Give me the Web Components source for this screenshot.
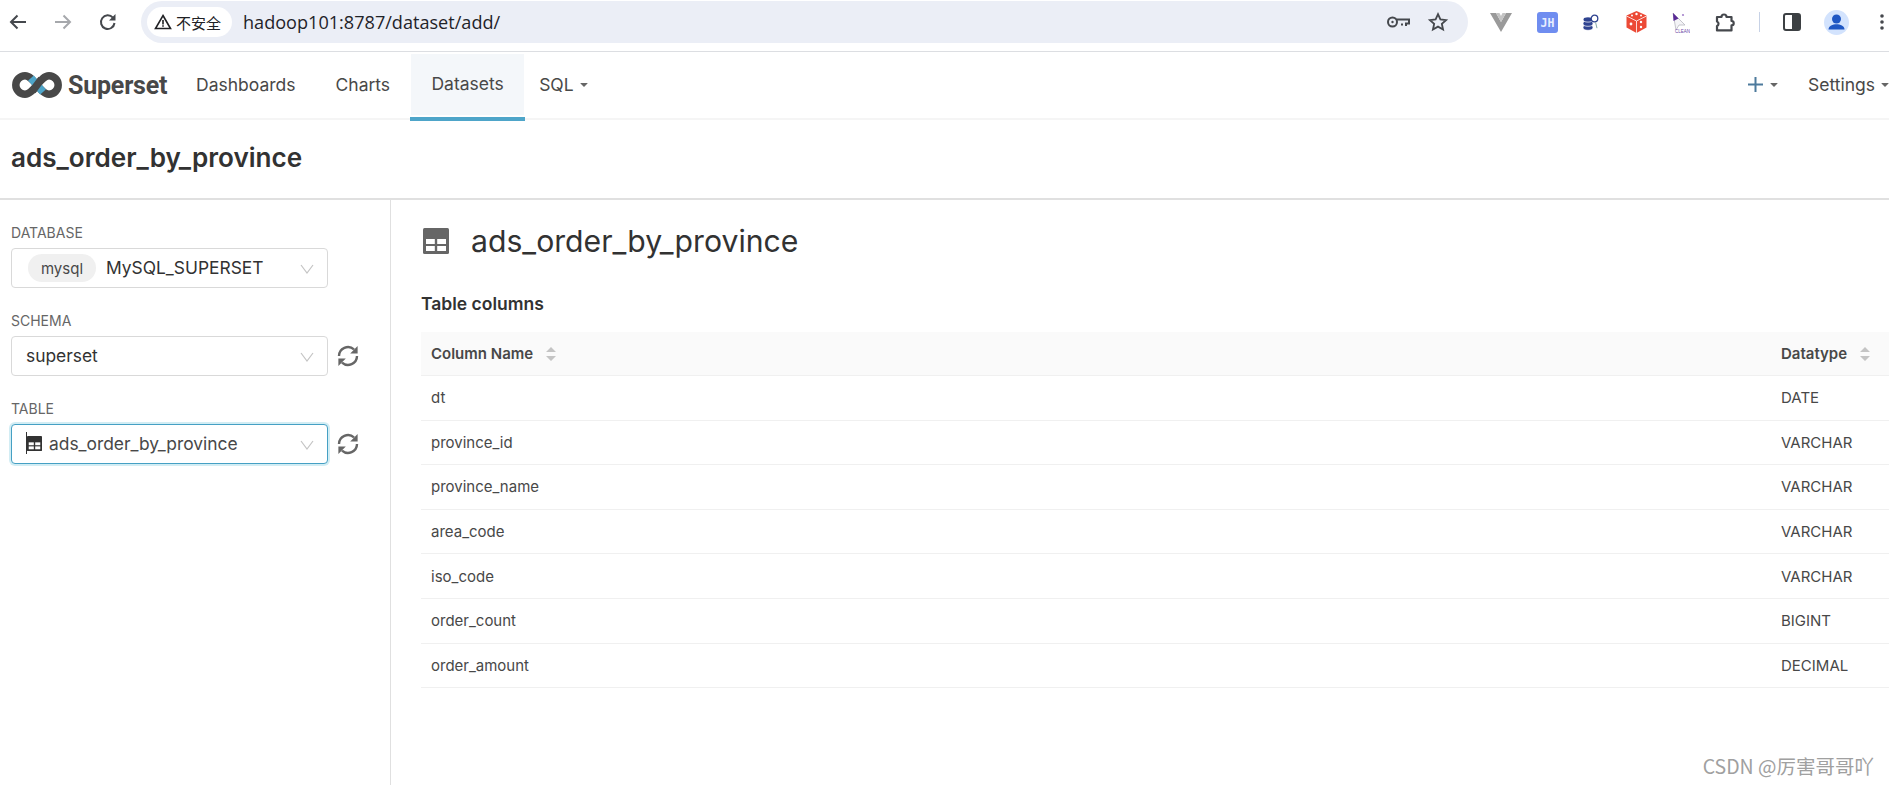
<!DOCTYPE html>
<html>
<head>
<meta charset="utf-8">
<title>Superset</title>
<style>
html,body{margin:0;padding:0;background:#fff;height:100%;overflow:hidden}
body{font-family:Inter,"Noto Sans CJK SC",sans-serif;color:#484848}
</style>
</head>
<body>
<app-page>
  <browser-bar url="hadoop101:8787/dataset/add/"></browser-bar>
  <top-nav></top-nav>
  <page-title>ads_order_by_province</page-title>
  <dataset-view>
    <side-panel slot="side"></side-panel>
    <columns-panel slot="main" name="ads_order_by_province"></columns-panel>
  </dataset-view>
  <water-mark>CSDN @厉害哥哥吖</water-mark>
</app-page>

<script>
const tableIcon = (size, color) => `<svg width="${size}" height="${size}" viewBox="0 0 26 26" style="display:block;flex:none"><rect width="26" height="26" rx="1.5" fill="${color}"/><rect x="3" y="11" width="8.8" height="5" fill="#fff"/><rect x="14.2" y="11" width="8.8" height="5" fill="#fff"/><rect x="3" y="18" width="8.8" height="5" fill="#fff"/><rect x="14.2" y="18" width="8.8" height="5" fill="#fff"/></svg>`;

const refreshIcon = `<svg width="22" height="22" viewBox="0 0 22 22" fill="none" stroke="#666" stroke-width="2.4" style="display:block"><path d="M2 11a9 9 0 0 1 15-6.600"/><path d="M20 11a9 9 0 0 1-15 6.600"/><path d="M20.600 1v7.400h-7.400z" fill="#666" stroke="none"/><path d="M1.400 21v-7.400h7.400z" fill="#666" stroke="none"/></svg>`;

class AppPage extends HTMLElement {
  constructor() {
    super();
    this.attachShadow({mode: 'open'}).innerHTML = `
    <style>:host{display:flex;flex-direction:column;height:785px;width:1889px;position:relative;overflow:hidden}</style>
    <slot></slot>`;
  }
}
customElements.define('app-page', AppPage);

class BrowserBar extends HTMLElement {
  connectedCallback() {
    this.attachShadow({mode: 'open'}).innerHTML = `
    <style>
    :host{display:flex;align-items:center;height:51px;border-bottom:1px solid #dcdee2;box-sizing:content-box;background:#fff;flex:none;
      font-family:"Open Sans","Noto Sans CJK SC",sans-serif}
    .nav{display:flex;width:141px;flex:none;padding-left:8px;box-sizing:border-box;gap:25px;padding-bottom:7px}
    .nav svg{display:block}
    .pill{flex:none;width:1327px;height:42px;margin-bottom:7px;background:#ebeef6;border-radius:21px;display:flex;align-items:center;padding:0 6px;box-sizing:border-box}
    .chip{display:flex;align-items:center;gap:4px;background:#fff;height:30px;width:85px;border-radius:15px;padding-left:7px;box-sizing:border-box;font-size:15px;color:#202124;flex:none;white-space:nowrap}
    .url{margin-left:11px;font-size:18.1px;color:#1f2329;flex:1}
    .pill svg{display:block}
    .star{display:flex;gap:17px;align-items:center;margin-right:13px}
    .ext{display:flex;align-items:center;flex:1;padding-bottom:7px;position:relative;height:24px}
    .ext>*{flex:none}
    </style>
    <div class="nav">
      <svg width="20" height="20" viewBox="0 0 20 20" fill="none" stroke="#45484d" stroke-width="2"><path d="M18 10H3M9.5 3.5 3 10l6.500 6.500"/></svg>
      <svg width="20" height="20" viewBox="0 0 20 20" fill="none" stroke="#a6a8ac" stroke-width="2"><path d="M2 10h15M10.500 3.500 17 10l-6.500 6.500"/></svg>
      <svg width="20" height="20" viewBox="0 0 20 20" fill="none" stroke="#45484d" stroke-width="2"><path d="M16.500 11a6.800 6.800 0 1 1-1.600-5.300"/><path d="M17.500 2v6.500H11z" fill="#45484d" stroke="none"/></svg>
    </div>
    <div class="pill">
      <div class="chip">
        <svg width="18" height="18" viewBox="0 0 18 18" style="flex:none"><path d="M9 2.500 16.500 15.500H1.500Z" fill="none" stroke="#202124" stroke-width="1.600"/><path d="M8.200 7h1.600v4.500H8.200zM8.200 12.300h1.600v1.500H8.200z" fill="#202124"/></svg>
        <span>不安全</span>
      </div>
      <div class="url">${this.getAttribute('url')}</div>
      <div class="star">
        <svg width="24" height="14" viewBox="0 0 24 14" fill="none" stroke="#45484d" stroke-width="2"><circle cx="6.500" cy="7" r="4.500"/><circle cx="6.500" cy="7" r="1.200" fill="#45484d" stroke="none"/><path d="M11 4.500h12v4h-3v2.500M16 8.500v2"/></svg>
        <svg width="22" height="22" viewBox="0 0 24 24" fill="none" stroke="#45484d" stroke-width="2"><path d="M12 3.500l2.600 5.700 6.200.7-4.600 4.200 1.300 6.100L12 17.100l-5.500 3.100 1.300-6.100-4.600-4.200 6.200-.7z"/></svg>
      </div>
    </div>
    <div class="ext">
      <svg style="margin-left:22px" width="22" height="20" viewBox="0 0 22 20"><path d="M0 1h6l5 9 5-9h6L11 20z" fill="#9a9a9a"/><path d="M6 1h3.500L11 4l1.500-3H16l-5 9z" fill="#c4c4c4"/></svg>
      <svg style="margin-left:24.500px" width="21" height="21" viewBox="0 0 21 21"><rect width="21" height="21" rx="3" fill="#6f8df0"/><text x="10.500" y="15" text-anchor="middle" font-family="'DejaVu Sans Mono',monospace" font-weight="700" font-size="11.500" fill="#e8edff">JH</text></svg>
      <svg style="margin-left:25px" width="16" height="17" viewBox="0 0 16 17"><g fill="#2f4390" stroke="#fff" stroke-width=".7"><ellipse cx="5" cy="13.500" rx="5" ry="2.800"/><ellipse cx="5" cy="9.500" rx="5" ry="2.800"/><ellipse cx="5" cy="5.500" rx="4.800" ry="2.600"/></g><circle cx="11.500" cy="4.500" r="3.300" fill="#fff" stroke="#2f4390" stroke-width="1.300"/><path d="M12.500 8.200l1.500 6" stroke="#8aa" stroke-width="1"/></svg>
      <svg style="margin-left:27px" width="21" height="22" viewBox="0 0 21 22"><path d="M10.500 0 20.500 4.500V16.500L10.500 22 .5 16.500V4.500z" fill="#ec4a36"/><path d="M.5 5 10.500 10v12M20.500 5 10.500 10" stroke="#fff" stroke-width=".8" fill="none"/><circle cx="10.500" cy="3" r="1.200" fill="#fff"/><circle cx="6" cy="4.500" r="1" fill="#fff"/><circle cx="15" cy="4.500" r="1" fill="#fff"/><circle cx="5" cy="13" r="1.400" fill="#fff"/><circle cx="15" cy="11" r="1.200" fill="#fff"/><circle cx="15" cy="16" r="1.200" fill="#fff"/></svg>
      <svg style="margin-left:25px" width="18" height="21" viewBox="0 0 18 21"><path d="M1 1 13 13H7l-3 5z" fill="#f4f4f7" stroke="#b8b8c0" stroke-width=".8"/><path d="M1 1l5.500 5.500L1.500 9z" fill="#5a2a96"/><circle cx="11" cy="3" r="1.100" fill="#a583cc"/><text x="18" y="20.500" text-anchor="end" font-family="'Liberation Sans',sans-serif" font-size="4.500" fill="#6b4aa8">CLEAN</text></svg>
      <svg style="margin-left:25px" width="21" height="20" viewBox="0 0 21 20" fill="none" stroke="#45484d" stroke-width="2.200"><path d="M2 5h4.500a2.500 2.500 0 0 1 5 0h5v4a2.200 2.200 0 0 1 0 4.400v5H2V14a2.500 2.500 0 0 0 0-4.600z" stroke-linejoin="round"/></svg>
      <div style="margin-left:23px;width:1px;height:20px;background:#c7d2e6"></div>
      <svg style="margin-left:23px" width="18" height="18" viewBox="0 0 18 18"><rect x="1" y="1" width="16" height="16" rx="2" fill="#fff" stroke="#3c4043" stroke-width="2"/><rect x="9" y="1" width="8" height="16" fill="#3c4043"/></svg>
      <svg style="margin-left:23.500px" width="25" height="25" viewBox="0 0 25 25"><circle cx="12.500" cy="12.500" r="12.500" fill="#d3e3fd"/><circle cx="12.500" cy="9" r="4.500" fill="#1f57c3"/><path d="M4.500 19.500c0-3.800 4.300-5.300 8-5.300s8 1.500 8 5.300z" fill="#1f57c3"/></svg>
      <svg style="margin-left:30.500px" width="4" height="18" viewBox="0 0 4 18"><circle cx="2" cy="3" r="1.800" fill="#45484d"/><circle cx="2" cy="9" r="1.800" fill="#45484d"/><circle cx="2" cy="15" r="1.800" fill="#45484d"/></svg>
    </div>`;
  }
}
customElements.define('browser-bar', BrowserBar);

class TopNav extends HTMLElement {
  constructor() {
    super();
    this.attachShadow({mode: 'open'}).innerHTML = `
    <style>
    :host{display:flex;align-items:stretch;height:68px;flex:none;border-bottom:2px solid #f5f5f5;box-sizing:border-box;
      font-family:Inter,sans-serif;font-size:17.5px;color:#484848}
    .logo{display:flex;align-items:center;gap:5px;width:188px;padding-left:11px;box-sizing:border-box;flex:none}
    .logo span{font:700 25px Roboto,sans-serif;color:#484848;letter-spacing:-.2px}
    .items{display:flex;flex:1;align-items:stretch;padding-top:2px}
    .item{display:flex;align-items:center;padding:0 8px 2px;margin-bottom:2px}
    .item.charts{margin-left:24px}
    .item.active{background:#f4f7fa;margin-left:13px;width:113px;padding:0 0 2px;justify-content:center;position:relative;margin-right:7px;margin-bottom:3px}
    .item.active::after{content:"";position:absolute;left:-1px;right:-1px;bottom:-6px;height:4px;background:#4ea5c9}
    .caret{display:inline-block;border:4px solid transparent;border-top-color:#666;border-bottom:0;margin-left:6px;border-radius:1px;margin-top:2px}
    .right{flex:none;width:142px;display:flex;align-items:center;white-space:nowrap;padding-bottom:2px}
    .right svg{flex:none}
    </style>
    <div class="logo">
      <svg width="52" height="28" viewBox="0 0 52 28" fill="none">
        <path d="M14 4.800a9.200 9.200 0 0 0 0 18.400c4.500 0 8-4.300 12-9.200s7.500-9.200 12-9.200a9.200 9.200 0 0 1 0 18.400c-4.500 0-8-4.300-12-9.200s-7.500-9.200-12-9.200z" stroke="#484848" stroke-width="7.500"/>
        <path d="M20 7 32 21" stroke="#4ea5c9" stroke-width="7.500"/>
        <path d="M21.500 20 30.500 8" stroke="#484848" stroke-width="7.500"/>
      </svg>
      <span>Superset</span>
    </div>
    <div class="items">
      <div class="item">Dashboards</div>
      <div class="item charts">Charts</div>
      <div class="item active">Datasets</div>
      <div class="item">SQL<i class="caret"></i></div>
    </div>
    <div class="right">
      <svg width="17" height="17" viewBox="0 0 17 17"><path d="M8.500 1v15M1 8.500h15" stroke="#4d7a9c" stroke-width="2"/></svg>
      <i class="caret"></i>
      <span style="margin-left:30px">Settings</span>
      <i class="caret"></i>
    </div>`;
  }
}
customElements.define('top-nav', TopNav);

class PageTitle extends HTMLElement {
  constructor() {
    super();
    this.attachShadow({mode: 'open'}).innerHTML = `
    <style>
    :host{display:flex;align-items:center;height:80px;flex:none;padding:0 0 4px 11px;border-bottom:2px solid #e0e0e0;box-sizing:border-box;
      font:600 26.1px Inter,sans-serif;color:#323232}
    </style><slot></slot>`;
  }
}
customElements.define('page-title', PageTitle);

class DatasetView extends HTMLElement {
  constructor() {
    super();
    this.attachShadow({mode: 'open'}).innerHTML = `
    <style>
    :host{display:grid;grid-template-columns:391px 1fr;flex:1;min-height:0}
    .side{border-right:1px solid #e0e0e0;box-sizing:border-box}
    .main{min-width:0}
    </style>
    <div class="side"><slot name="side"></slot></div>
    <div class="main"><slot name="main"></slot></div>`;
  }
}
customElements.define('dataset-view', DatasetView);

const fieldTpl = document.createElement('template');
fieldTpl.innerHTML = `
<style>
:host{display:block;margin-bottom:24px}
label{display:block;font-size:14px;line-height:17px;color:#666;height:17px;margin-bottom:7px}
.row{display:flex;align-items:center;gap:9px}
.box{width:317px;height:40px;box-sizing:border-box;border:1px solid #d9d9d9;border-radius:4px;display:flex;align-items:center;padding:0 0 2px 14px;
  font-size:17.4px;color:#323232;position:relative;background:#fff}
:host([focus]) .box{border-color:#45a0c4;box-shadow:0 0 0 2px rgba(32,167,201,.2)}
.arrow{position:absolute;right:13px;top:15px}
.refresh{display:block;flex:none;margin-top:-1px}
</style>
<label></label>
<div class="row">
  <div class="box">
    <slot></slot>
    <svg class="arrow" width="14" height="10" viewBox="0 0 14 10" fill="none" stroke="#c4c4c4" stroke-width="1.200"><path d="M1 1l6 8 6-8"/></svg>
  </div>
  <div class="refresh"></div>
</div>`;

class DbField extends HTMLElement {
  constructor() {
    super();
    this.attachShadow({mode: 'open'}).appendChild(fieldTpl.content.cloneNode(true));
    this.shadowRoot.querySelector('label').innerText = this.getAttribute('label');
    if (this.hasAttribute('refresh')) this.shadowRoot.querySelector('.refresh').innerHTML = refreshIcon;
  }
}
customElements.define('db-field', DbField);

class SidePanel extends HTMLElement {
  constructor() {
    super();
    this.attachShadow({mode: 'open'}).innerHTML = `
    <style>
    :host{display:block;padding:24px 0 0 11px}
    .tag{background:#f0f0f0;border-radius:14px;height:28px;width:68px;display:flex;align-items:center;justify-content:center;font-size:15px;color:#484848;margin:2px 10px 0 2px}
    .cursor{width:1px;height:22px;background:#323232}
    .tbl{color:#484848;margin-left:7px}
    </style>
    <db-field label="DATABASE"><span class="tag">mysql</span>MySQL_SUPERSET</db-field>
    <db-field label="SCHEMA" refresh>superset</db-field>
    <db-field label="TABLE" refresh focus><span class="cursor"></span>${tableIcon(15, '#323232')}<span class="tbl">ads_order_by_province</span></db-field>`;
  }
}
customElements.define('side-panel', SidePanel);

class ColumnsPanel extends HTMLElement {
  constructor() {
    super();
    const rows = [['dt','DATE'],['province_id','VARCHAR'],['province_name','VARCHAR'],['area_code','VARCHAR'],['iso_code','VARCHAR'],['order_count','BIGINT'],['order_amount','DECIMAL']];
    const sort = `<svg width="12" height="16" viewBox="0 0 12 16"><path d="M6 1l5 5H1zM6 15l5-5H1z" fill="#c4c4c4"/></svg>`;
    this.attachShadow({mode: 'open'}).innerHTML = `
    <style>
    :host{display:block;padding:26px 0 0 30px}
    .head{display:flex;align-items:center;gap:22px;height:30px;font-size:30.2px;color:#323232}
    .head svg{margin-left:2px}
    h4{margin:36px 0 0;font-size:17.5px;font-weight:600;color:#323232;line-height:24px;height:24px}
    .tbl{margin-top:16px;font-size:15px;color:#484848}
    .tr{display:grid;grid-template-columns:1350px 1fr;height:44.600px;box-sizing:border-box;border-bottom:1px solid #f0f0f0;align-items:center}
    .tr>div{padding-left:10px}
    .tr.th{height:44px;background:#fafafa;font-weight:600}
    .th div{display:flex;align-items:center;gap:12px}
    </style>
    <div class="head">${tableIcon(26, '#666')}<span>${this.getAttribute('name')}</span></div>
    <h4>Table columns</h4>
    <div class="tbl">
      <div class="tr th"><div>Column Name ${sort}</div><div>Datatype ${sort}</div></div>
      ${rows.map(r => `<div class="tr"><div>${r[0]}</div><div>${r[1]}</div></div>`).join('')}
    </div>`;
  }
}
customElements.define('columns-panel', ColumnsPanel);

class WaterMark extends HTMLElement {
  constructor() {
    super();
    this.attachShadow({mode: 'open'}).innerHTML = `
    <style>
    :host{position:absolute;right:15px;bottom:5px;font:19.500px "Noto Sans CJK SC",sans-serif;color:#a0a0a0;white-space:nowrap}
    </style><slot></slot>`;
  }
}
customElements.define('water-mark', WaterMark);
</script>
</body>
</html>
